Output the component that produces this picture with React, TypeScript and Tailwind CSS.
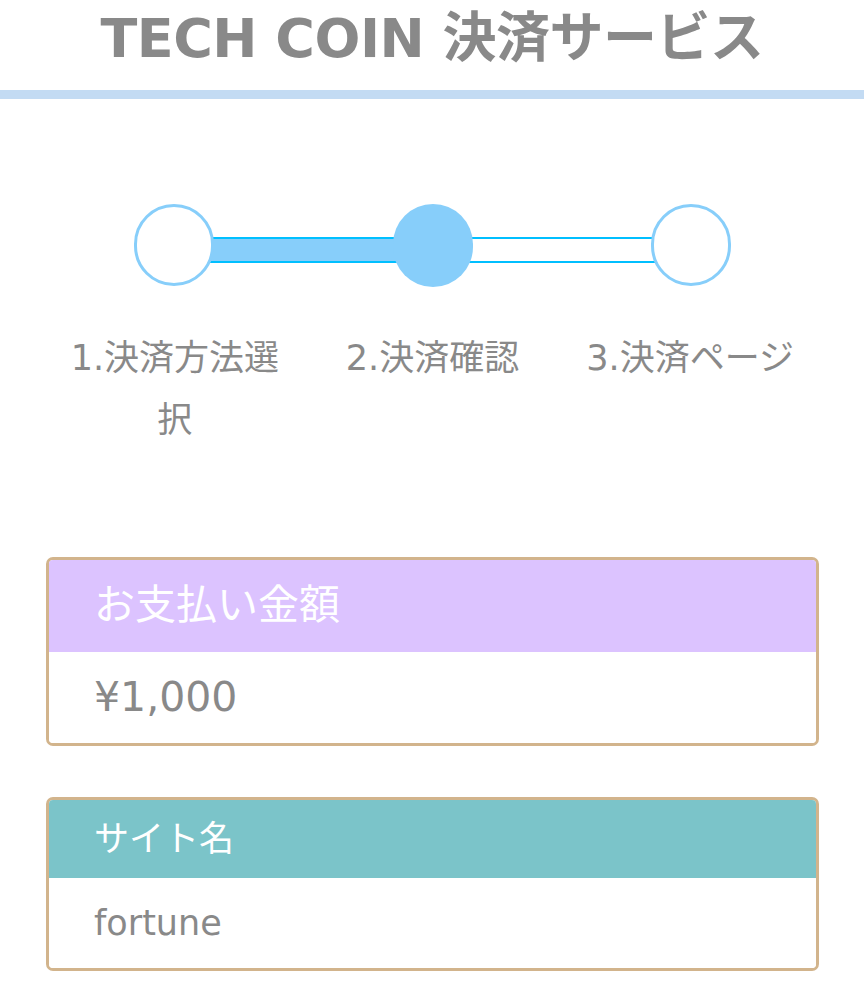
import React from "react";

const font = { fontFamily: '"DejaVu Sans", "Noto Sans CJK JP", sans-serif' };

export default function App() {
  return (
    <div className="w-[864px] min-h-[989px] bg-white text-[#898989]" style={font}>
      <header className="h-[90px] flex items-center justify-center pb-[12px]">
        <h1 className="text-[54px] font-bold leading-none tracking-[-0.5px]">TECH COIN 決済サービス</h1>
      </header>
      <div className="h-[9px] bg-[#c3dbf3]" />

      <div className="mx-[46px] w-[773px]">
        {/* progress */}
        <div className="mt-[105px] flex items-start px-[88px]">
          <div className="relative z-10 w-[80px] h-[82px] shrink-0 rounded-full border-[3px] border-[#87cefa] bg-white" />
          <div className="-mx-[4px] mt-[33px] h-[26px] flex-1 border-y-2 border-[#00bfff] bg-[#87cefa]" />
          <div className="relative z-10 w-[80px] h-[83px] shrink-0 rounded-full bg-[#87cefa]" />
          <div className="-mx-[4px] mt-[33px] h-[26px] flex-1 border-y-2 border-[#00bfff] bg-white" />
          <div className="relative z-10 w-[80px] h-[82px] shrink-0 rounded-full border-[3px] border-[#87cefa] bg-white" />
        </div>

        {/* labels */}
        <div className="mt-[40px] grid grid-cols-3 text-center text-[35px] leading-[62px]">
          <div className="px-[14px]">1.決済方法選択</div>
          <div className="px-[14px]">2.決済確認</div>
          <div className="px-[14px]">3.決済ページ</div>
        </div>

        {/* card 1 */}
        <div className="mt-[106px] rounded-[7px] border-[3px] border-[#d2b48c] overflow-hidden">
          <div className="h-[92px] bg-[#dcc3ff] px-[45px] flex items-center text-[41px] text-white">お支払い金額</div>
          <div className="h-[91px] bg-white px-[45px] flex items-center text-[41px]">¥1,000</div>
        </div>

        {/* card 2 */}
        <div className="mt-[51px] rounded-[7px] border-[3px] border-[#d2b48c] overflow-hidden">
          <div className="h-[78px] bg-[#7bc4c9] px-[45px] flex items-center text-[35px] text-white">サイト名</div>
          <div className="h-[90px] bg-white px-[45px] flex items-center text-[35px]">fortune</div>
        </div>
      </div>
    </div>
  );
}
